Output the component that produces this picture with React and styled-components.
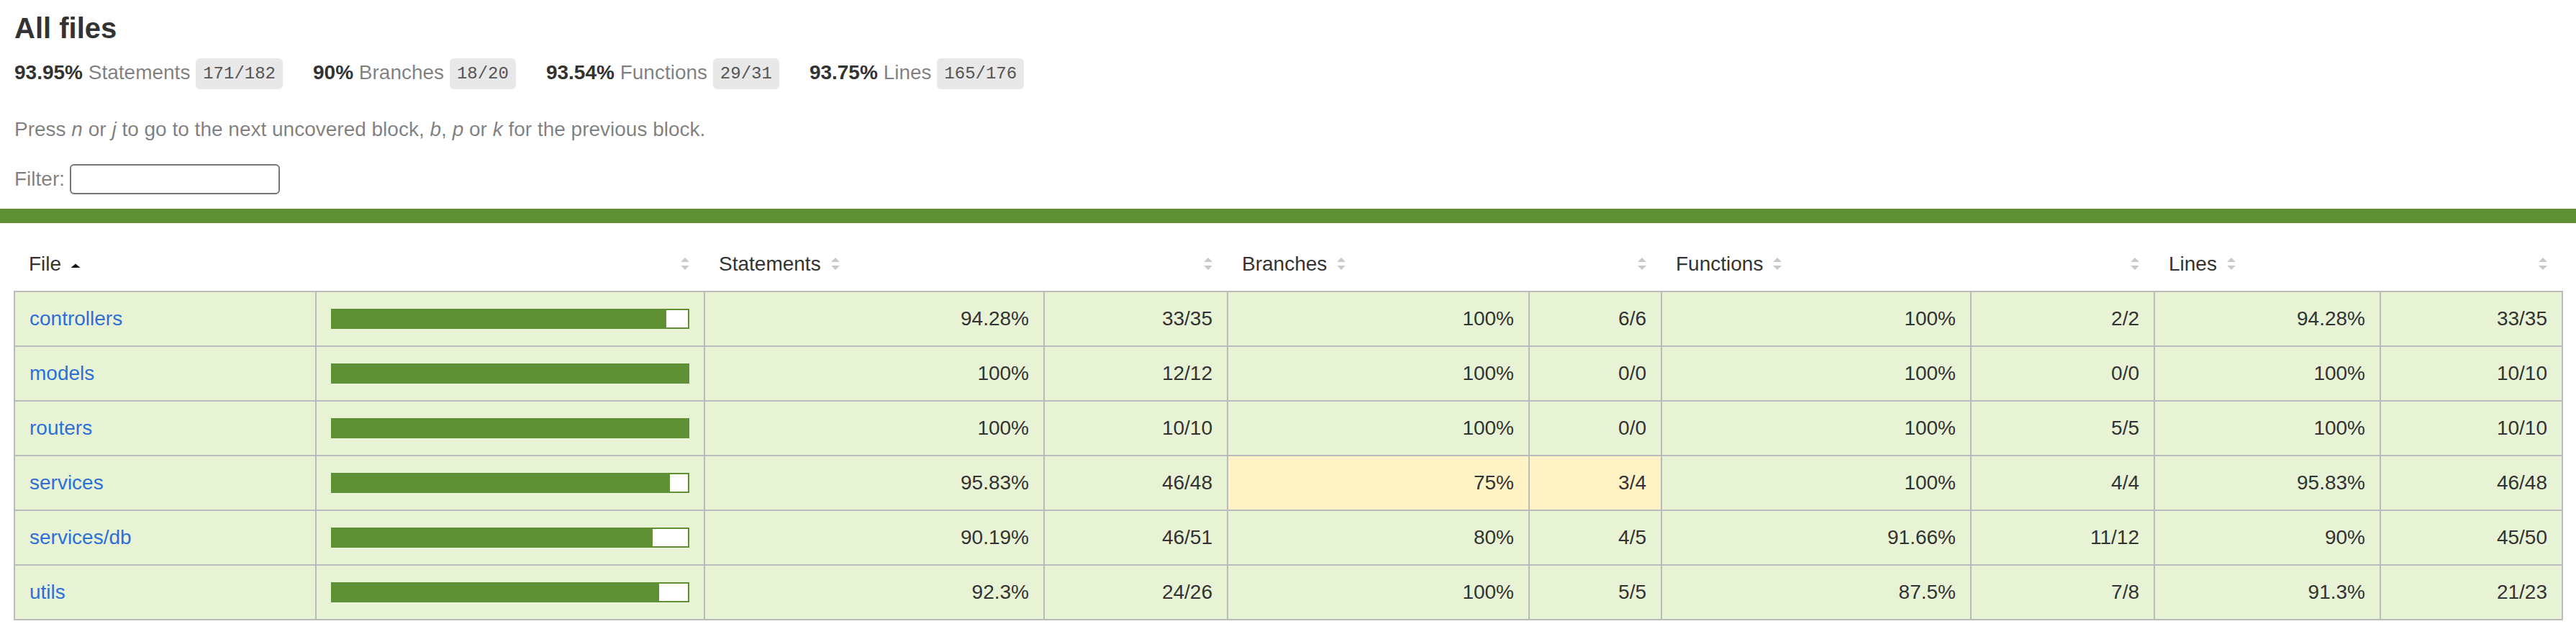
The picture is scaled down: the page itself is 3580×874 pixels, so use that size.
import React from 'react'
import styled, { createGlobalStyle } from 'styled-components'

const GlobalStyle = createGlobalStyle`
  *, *:before, *:after { box-sizing: border-box; }
  html, body { margin: 0; padding: 0; background: #fff; }
  body {
    font-family: "Liberation Sans", Arial, sans-serif;
    font-size: 28px;
    color: #333;
  }
`

const GREEN = '#5f9034'

const summary = [
  { pct: '93.95%', label: 'Statements', frac: '171/182' },
  { pct: '90%', label: 'Branches', frac: '18/20' },
  { pct: '93.54%', label: 'Functions', frac: '29/31' },
  { pct: '93.75%', label: 'Lines', frac: '165/176' },
]

// each metric: [pct, fraction, level]
const rows = [
  { file: 'controllers', pic: 94.28, s: ['94.28%', '33/35'], b: ['100%', '6/6'], f: ['100%', '2/2'], l: ['94.28%', '33/35'] },
  { file: 'models', pic: 100, s: ['100%', '12/12'], b: ['100%', '0/0'], f: ['100%', '0/0'], l: ['100%', '10/10'] },
  { file: 'routers', pic: 100, s: ['100%', '10/10'], b: ['100%', '0/0'], f: ['100%', '5/5'], l: ['100%', '10/10'] },
  { file: 'services', pic: 95.83, s: ['95.83%', '46/48'], b: ['75%', '3/4', 'medium'], f: ['100%', '4/4'], l: ['95.83%', '46/48'] },
  { file: 'services/db', pic: 90.19, s: ['90.19%', '46/51'], b: ['80%', '4/5'], f: ['91.66%', '11/12'], l: ['90%', '45/50'] },
  { file: 'utils', pic: 92.3, s: ['92.3%', '24/26'], b: ['100%', '5/5'], f: ['87.5%', '7/8'], l: ['91.3%', '21/23'] },
]

const columns = [419, 540, 472, 255, 419, 184, 430, 255, 314, 253]

const SortIcon = ({ sorted }) => (
  <Sorter width="14" height="20" viewBox="0 0 14 20">
    {sorted ? (
      <polygon points="0.5,15 13.5,15 7,9.5" fill="#111" />
    ) : (
      <>
        <polygon points="1,7 13,7 7,1" fill="#c9c9c9" />
        <polygon points="1,12 13,12 7,18" fill="#c9c9c9" />
      </>
    )}
  </Sorter>
)

const Head = ({ label, align = 'left', sorted }) => (
  <HeadCell>
    <HeadInner $align={align}>
      {label && <span>{label}</span>}
      <SortIcon sorted={sorted} />
    </HeadInner>
  </HeadCell>
)

const Metric = ({ m }) => (
  <>
    <Cell $level={m[2]}>{m[0]}</Cell>
    <Cell $level={m[2]}>{m[1]}</Cell>
  </>
)

const App = () => {
  return (
    <>
      <GlobalStyle />
      <Header>
        <Title>All files</Title>
        <Stats>
          {summary.map(s => (
            <Stat key={s.label}>
              <Strong>{s.pct} </Strong>
              <Quiet>{s.label}</Quiet> <Fraction>{s.frac}</Fraction>
            </Stat>
          ))}
        </Stats>
        <Hint>
          Press <em>n</em> or <em>j</em> to go to the next uncovered block, <em>b</em>, <em>p</em> or <em>k</em> for the previous block.
        </Hint>
        <FilterRow>
          <span>Filter:</span>
          <Search type="search" />
        </FilterRow>
      </Header>
      <StatusLine />
      <TableWrap>
        <Table>
          <colgroup>
            {columns.map((w, i) => <col key={i} style={{ width: w }} />)}
          </colgroup>
          <thead>
            <tr>
              <Head label="File" sorted />
              <Head align="right" />
              <Head label="Statements" />
              <Head align="right" />
              <Head label="Branches" />
              <Head align="right" />
              <Head label="Functions" />
              <Head align="right" />
              <Head label="Lines" />
              <Head align="right" />
            </tr>
          </thead>
          <Body>
            {rows.map(r => (
              <Row key={r.file}>
                <Cell $align="left"><FileLink href="#">{r.file}</FileLink></Cell>
                <Cell>
                  <Chart>
                    <Fill style={{ width: `${Math.floor(r.pic)}%` }} />
                  </Chart>
                </Cell>
                <Metric m={r.s} />
                <Metric m={r.b} />
                <Metric m={r.f} />
                <Metric m={r.l} />
              </Row>
            ))}
          </Body>
        </Table>
      </TableWrap>
    </>
  )
}

export default App

const Header = styled.div`
  padding: 20px 20px 20px;
`

const Title = styled.h1`
  margin: 0;
  font-size: 40px;
  line-height: 38px;
  font-weight: bold;
`

const Stats = styled.div`
  display: flex;
`

const Stat = styled.div`
  padding: 27px 42px 12px 0;
  line-height: 32px;
  white-space: nowrap;
`

const Strong = styled.span`
  font-weight: bold;
`

const Quiet = styled.span`
  color: rgba(0, 0, 0, 0.5);
`

const Fraction = styled.span`
  font-family: "Liberation Mono", monospace;
  font-size: 24px;
  color: #555;
  background: #e8e8e8;
  padding: 8px 10px;
  border-radius: 6px;
  vertical-align: middle;
`

const Hint = styled.p`
  margin: 33px 0 22px;
  line-height: 32px;
  color: rgba(0, 0, 0, 0.5);
`

const FilterRow = styled.div`
  display: flex;
  align-items: center;
  gap: 7px;
  padding-top: 10px;
  line-height: 32px;
  color: rgba(0, 0, 0, 0.5);
`

const Search = styled.input`
  width: 292px;
  height: 42px;
  margin: 0;
  border: 2px solid #767676;
  border-radius: 6px;
  background: #fff;
  font-size: 26px;
`

const StatusLine = styled.div`
  height: 20px;
  background: ${GREEN};
`

const TableWrap = styled.div`
  padding: 20px 20px 20px 19px;
`

const Table = styled.table`
  width: 100%;
  border-collapse: collapse;
  table-layout: fixed;
`

const HeadCell = styled.th`
  padding: 20px;
  font-weight: normal;
  white-space: nowrap;
`

const HeadInner = styled.div`
  display: flex;
  align-items: center;
  justify-content: ${p => (p.$align === 'right' ? 'flex-end' : 'flex-start')};
  gap: 13px;
  height: 34px;
  line-height: 34px;
`

const Sorter = styled.svg`
  display: block;
  flex: none;
`

const Body = styled.tbody`
  border: 2px solid #bbb;
`

const Row = styled.tr`
  border-bottom: 2px solid #bbb;
`

const Cell = styled.td`
  padding: 20px;
  line-height: 34px;
  white-space: nowrap;
  text-align: ${p => p.$align || 'right'};
  border-right: 2px solid #bbb;
  background: ${p => (p.$level === 'medium' ? '#fff3c6' : '#e8f3d5')};
  &:last-child {
    border-right: none;
  }
`

const FileLink = styled.a`
  color: #2b70d8;
  text-decoration: none;
`

const Chart = styled.div`
  display: flex;
  height: 28px;
  border: 2px solid ${GREEN};
  background: #fff;
`

const Fill = styled.div`
  height: 100%;
  background: ${GREEN};
`
